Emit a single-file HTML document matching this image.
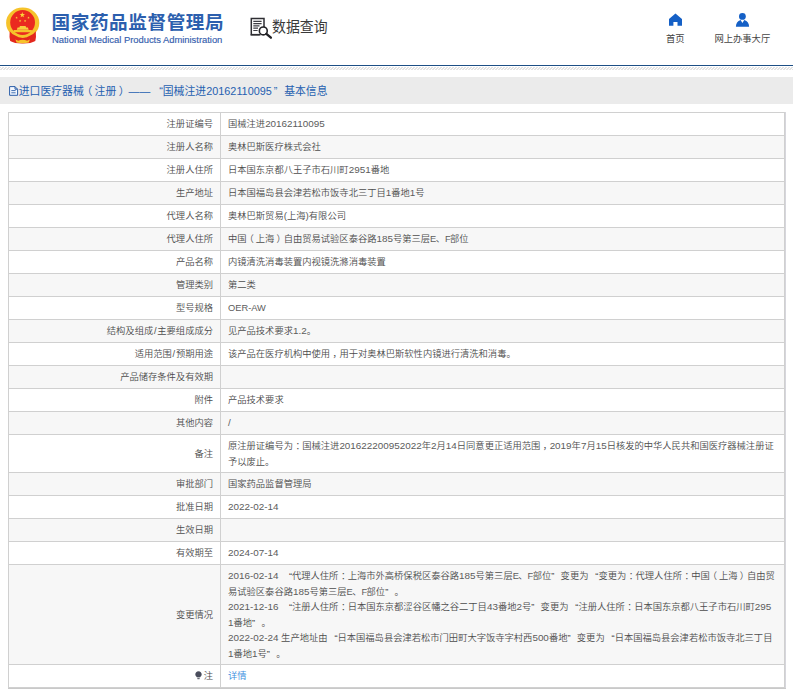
<!DOCTYPE html>
<html lang="zh-CN">
<head>
<meta charset="utf-8">
<title>国家药品监督管理局 数据查询</title>
<style>
html,body{margin:0;padding:0;background:#fff;}
body{width:793px;height:696px;position:relative;overflow:hidden;
  font-family:"Liberation Sans","Noto Sans CJK SC",sans-serif;color:#4a4a4a;}
.abs{position:absolute;white-space:nowrap;}
#logo{left:2px;top:2px;width:44px;height:48px;}
#title{left:51.5px;top:10px;font-size:18.6px;line-height:26px;font-weight:bold;color:#2c5fae;letter-spacing:0.6px;}
#sub{left:52px;top:32.7px;font-size:9.45px;line-height:13px;color:#3560ae;-webkit-text-stroke:0.15px #3560ae;letter-spacing:-0.03px;}
#dq-ico{left:246px;top:14px;width:30px;height:28px;}
#dq{left:272px;top:15.6px;font-size:13.9px;line-height:20px;color:#3a3a3a;transform:scaleY(1.08);transform-origin:0 0;}
.nav{font-size:9.3px;line-height:12px;color:#444;text-align:center;}
#nav1{left:655.3px;top:32.9px;width:40px;}
#nav2{left:702.3px;top:32.9px;width:80px;}
#ico-home{left:665px;top:10px;width:22px;height:20px;}
#ico-user{left:732px;top:10px;width:22px;height:20px;}
#rule{left:0;top:64.6px;width:793px;height:1.5px;background:#1d4f85;}
#hatch{left:0;top:66.7px;width:793px;height:3.3px;
  background:repeating-linear-gradient(135deg,#e3e3e3 0,#e3e3e3 0.75px,#fff 0.75px,#fff 2.1213px);}
#bar{left:0;top:77px;width:793px;height:27px;background:#ebebeb;}
#bartxt{left:18.8px;top:83px;font-size:10.84px;line-height:17px;color:#2560b0;}
#bartxt span{display:inline-block;line-height:12px;}
#bar-ico{left:6px;top:82px;width:16px;height:18px;}
table{position:absolute;left:8px;top:112px;width:777px;border-collapse:collapse;table-layout:fixed;
  font-size:9.29px;line-height:15.5px;color:#4c4c4c;font-weight:350;}
td{border:1px solid #d0d0d0;padding:2px 7px 0 7px;box-sizing:border-box;height:23px;vertical-align:middle;white-space:nowrap;overflow:hidden;}
td.l{width:212px;text-align:right;padding-right:7px;}
tr:nth-child(even) td{background:#f7f7f7;}
a{color:#3b8ee0;text-decoration:none;}
.n,.c,.e,.qo,.qc,.sp{line-height:9px;}
.n,.c,.e{color:#5c5c5c;}
.n{font-size:9.9px;}
.c{font-size:9.3px;}
.e{font-size:9.3px;letter-spacing:-0.6px;}
.qo{display:inline-block;width:7.4px;text-align:right;}
.qc{display:inline-block;width:6.8px;text-align:left;}
.sp{display:inline-block;width:3.5px;}
i{font-style:normal;position:relative;}
.pl{left:-0.22em;}
.pr{left:0.22em;}
.pm{left:0.27em;}
.s{display:inline-block;width:4.1px;text-align:center;line-height:9px;}
</style>
</head>
<body>
<svg id="logo" class="abs" viewBox="2 2 44 48">
<ellipse cx="22.7" cy="22.9" rx="16.6" ry="15.3" fill="#f6c32b"/>
<circle cx="22.6" cy="22.5" r="12.4" fill="#ea2a20"/>
<path d="M16.8 29.7 L17.6 27.5 L19.4 27.5 L19.9 25.9 L25.6 25.9 L26.1 27.5 L27.9 27.5 L28.7 29.7Z" fill="#f8cf3f"/>
<path d="M12.9 32.3 L13.8 30.1 L31.7 30.1 L32.6 32.3Z" fill="#f6c32b"/>
<path d="M9.7 31.2 Q12 34.2 15.2 35.6 Q18.5 37.9 22.7 38.1 Q27 37.9 30.3 35.6 Q33.5 34.2 35.8 31.2 Q36.4 37 35.3 41 Q31 43.6 22.7 43.5 Q14.5 43.6 10.2 41 Q9.1 37 9.7 31.2Z" fill="#e3271d"/>
<path d="M15.4 39.5 L18.2 40.7 Q22.7 38.6 27.2 40.7 L30 39.5 L28.8 42.6 Q22.7 43.9 16.6 42.6Z" fill="#f6c32b"/>
<polygon points="22.30,12.10 22.98,14.06 25.06,14.10 23.40,15.36 24.00,17.35 22.30,16.16 20.60,17.35 21.20,15.36 19.54,14.10 21.62,14.06" fill="#fbd43a"/><polygon points="16.60,16.40 16.91,17.28 17.84,17.30 17.09,17.86 17.36,18.75 16.60,18.22 15.84,18.75 16.11,17.86 15.36,17.30 16.29,17.28" fill="#fbd43a"/><polygon points="28.50,16.40 28.81,17.28 29.74,17.30 28.99,17.86 29.26,18.75 28.50,18.22 27.74,18.75 28.01,17.86 27.26,17.30 28.19,17.28" fill="#fbd43a"/><polygon points="20.10,19.70 20.41,20.58 21.34,20.60 20.59,21.16 20.86,22.05 20.10,21.52 19.34,22.05 19.61,21.16 18.86,20.60 19.79,20.58" fill="#fbd43a"/><polygon points="25.10,19.70 25.41,20.58 26.34,20.60 25.59,21.16 25.86,22.05 25.10,21.52 24.34,22.05 24.61,21.16 23.86,20.60 24.79,20.58" fill="#fbd43a"/>
</svg>
<div id="title" class="abs">国家药品监督管理局</div>
<div id="sub" class="abs">National Medical Products Administration</div>
<svg id="dq-ico" class="abs" viewBox="246 14 30 28">
<path d="M264 28 V18.6 H251.3 V34.7 H260.5" fill="none" stroke="#2e2e33" stroke-width="1.5"/>
<path d="M250.7 33.9 H259.5 V35.4 H250.7Z" fill="#2e2e33"/>
<g stroke="#3e3e44" stroke-width="1.2"><path d="M253.3 21.3H261.6M253.3 23.6H261.6M253.3 25.9H259.5M253.3 28.2H258M253.3 30.5H257.6"/></g>
<circle cx="263.3" cy="30.9" r="3.95" fill="#fff" stroke="#222226" stroke-width="1.6"/>
<path d="M266.4 33.8 L270.9 37.7" stroke="#222226" stroke-width="2.3" stroke-linecap="round"/>
</svg>
<div id="dq" class="abs">数据查询</div>
<svg id="ico-home" class="abs" viewBox="665 10 22 20"><path d="M675.45 13.6 L682 18.9 V25.8 H677.5 V22.1 H673.4 V25.8 H669 V18.9Z" fill="#1560c6" /></svg>
<svg id="ico-user" class="abs" viewBox="732 10 22 20"><circle cx="742.4" cy="16.4" r="3.4" fill="#1560c6"/><path d="M735.9 26.7 Q735.9 21.5 740.6 19.9 L742.4 22.9 L744.3 19.9 Q749.1 21.5 749.1 26.7Z" fill="#1560c6"/></svg>
<div id="nav1" class="abs nav">首页</div>
<div id="nav2" class="abs nav">网上办事大厅</div>
<div id="rule" class="abs"></div>
<div id="hatch" class="abs"></div>
<div id="bar" class="abs"></div>
<svg id="bar-ico" class="abs" viewBox="6 82 16 18"><path d="M9.6 86.6 H15 L17.6 89.2 V95.3 H9.6Z M15 86.6 V89.2 H17.6" fill="#f4f8ff" stroke="#2a5da8" stroke-width="1"/><path d="M11.3 90.6H15.6M11.3 92.8H15.6" stroke="#2a5da8" stroke-width="0.9"/></svg>
<div id="bartxt" class="abs"><span style="width:109.8px">进口医疗器械<i class="pl">（</i>注册<i class="pr">）</i></span><span style="width:22.4px">——</span><span style="width:11.8px;text-align:right">“</span><span style="width:43.5px">国械注进</span><span style="width:67.5px">20162110095</span><span style="width:10.4px">”</span>基本信息</div>
<table>
<tr><td class="l">注册证编号</td><td>国械注进<span class="n">20162110095</span></td></tr>
<tr><td class="l">注册人名称</td><td>奥林巴斯医疗株式会社</td></tr>
<tr><td class="l">注册人住所</td><td>日本国东京都八王子市石川町<span class="n">2951</span>番地</td></tr>
<tr><td class="l">生产地址</td><td>日本国福岛县会津若松市饭寺北三丁目<span class="n">1</span>番地<span class="n">1</span>号</td></tr>
<tr><td class="l">代理人名称</td><td>奥林巴斯贸易<span class="n">(</span>上海<span class="n">)</span>有限公司</td></tr>
<tr><td class="l">代理人住所</td><td>中国<i class="pl">（</i>上海<i class="pr">）</i>自由贸易试验区泰谷路<span class="n">185</span>号第三层<span class="e">E</span>、<span class="e">F</span>部位</td></tr>
<tr><td class="l">产品名称</td><td>内镜清洗消毒装置内视镜洗滌消毒装置</td></tr>
<tr><td class="l">管理类别</td><td>第二类</td></tr>
<tr><td class="l">型号规格</td><td><span class="c">OER-AW</span></td></tr>
<tr><td class="l">结构及组成<span class="s">/</span>主要组成成分</td><td>见产品技术要求<span class="n">1.2</span>。</td></tr>
<tr><td class="l">适用范围<span class="s">/</span>预期用途</td><td>该产品在医疗机构中使用<i class="pm">，</i>用于对奥林巴斯软性内镜进行清洗和消毒。</td></tr>
<tr><td class="l">产品储存条件及有效期</td><td></td></tr>
<tr><td class="l">附件</td><td>产品技术要求</td></tr>
<tr><td class="l">其他内容</td><td><span class="n">/</span></td></tr>
<tr><td class="l" style="height:38px">备注</td><td>原注册证编号为<i class="pm">：</i>国械注进<span class="n">201622200952022</span>年<span class="n">2</span>月<span class="n">14</span>日同意更正适用范围<i class="pm">，</i><span class="n">2019</span>年<span class="n">7</span>月<span class="n">15</span>日核发的中华人民共和国医疗器械注册证<br>予以废止。</td></tr>
<tr><td class="l">审批部门</td><td>国家药品监督管理局</td></tr>
<tr><td class="l">批准日期</td><td><span class="n">2022-02-14</span></td></tr>
<tr><td class="l">生效日期</td><td></td></tr>
<tr><td class="l">有效期至</td><td><span class="n">2024-07-14</span></td></tr>
<tr><td class="l" style="height:100px">变更情况</td><td><span class="n">2016-02-14</span> <span class="sp"></span><span class="qo">“</span>代理人住所<i class="pm">：</i>上海市外高桥保税区泰谷路<span class="n">185</span>号第三层<span class="e">E</span>、<span class="e">F</span>部位<span class="qc">”</span> 变更为 <span class="qo">“</span>变更为<i class="pm">：</i>代理人住所<i class="pm">：</i>中国<i class="pl">（</i>上海<i class="pr">）</i>自由贸<br>易试验区泰谷路<span class="n">185</span>号第三层<span class="e">E</span>、<span class="e">F</span>部位<span class="qc">”</span> 。<br><span class="n">2021-12-16</span> <span class="sp"></span><span class="qo">“</span>注册人住所<i class="pm">：</i>日本国东京都涩谷区幡之谷二丁目<span class="n">43</span>番地<span class="n">2</span>号<span class="qc">”</span> 变更为 <span class="qo">“</span>注册人住所<i class="pm">：</i>日本国东京都八王子市石川町<span class="n">295</span><br><span class="n">1</span>番地<span class="qc">”</span> 。<br><span class="n">2022-02-24</span> 生产地址由 <span class="qo">“</span>日本国福岛县会津若松市门田町大字饭寺字村西<span class="n">500</span>番地<span class="qc">”</span> 变更为 <span class="qo">“</span>日本国福岛县会津若松市饭寺北三丁目<br><span class="n">1</span>番地<span class="n">1</span>号<span class="qc">”</span> 。</td></tr>
<tr><td class="l"><svg width="7" height="9" viewBox="0 0 7 9" style="vertical-align:-1.2px;margin-right:1.3px"><path d="M3.5 0.2 C1.6 0.2 0.3 1.6 0.3 3.3 C0.3 4.6 1.2 5.4 1.8 6.2 L5.2 6.2 C5.8 5.4 6.7 4.6 6.7 3.3 C6.7 1.6 5.4 0.2 3.5 0.2Z" fill="#4a4d5c"/><path d="M2.1 6.7H4.9L4.5 8.3H2.5Z" fill="#6a6d78"/></svg>注</td><td><a>详情</a></td></tr>
</table>
<div class="abs" style="left:785px;top:112px;width:0.7px;height:576.7px;background:#d6d6dc"></div>
<div class="abs" style="left:8px;top:688px;width:777.7px;height:0.7px;background:#c9c9c9"></div>
</body>
</html>
